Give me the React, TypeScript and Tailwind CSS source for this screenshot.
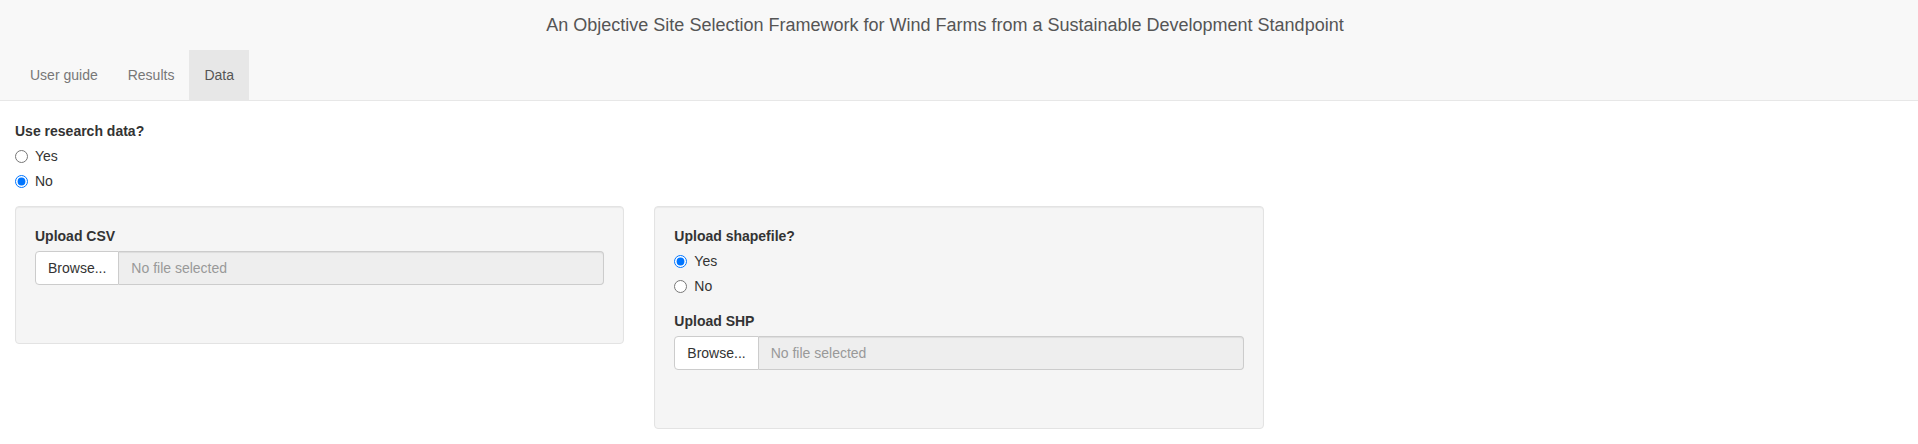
const font = { fontFamily: '"Liberation Sans", Arial, sans-serif' }

function Radio({ name, label, checked }: { name: string; label: string; checked?: boolean }) {
  return (
    <label className="flex h-5 items-center gap-[7px] text-[14px] leading-5 text-[#333]">
      <input type="radio" name={name} defaultChecked={checked} className="m-0 h-[13px] w-[13px]" />
      <span>{label}</span>
    </label>
  )
}

function FileInput({ label }: { label: string }) {
  return (
    <div>
      <div className="mb-[5px] text-[14px] font-bold leading-5 text-[#333]">{label}</div>
      <div className="flex h-[34px] text-[14px]">
        <span className="flex items-center rounded-l-[4px] border border-[#ccc] bg-white px-3 text-[#333]">Browse...</span>
        <span className="flex flex-1 items-center rounded-r-[4px] border border-l-0 border-[#ccc] bg-[#eee] px-3 text-[#999] shadow-[inset_0_1px_1px_rgba(0,0,0,0.075)]">
          No file selected
        </span>
      </div>
      {/* hidden progress bar space */}
      <div className="mb-[15px] h-[24px]" />
    </div>
  )
}

function Well({ children }: { children: React.ReactNode }) {
  return (
    <div className="rounded-[4px] border border-[#e3e3e3] bg-[#f5f5f5] p-[19px] shadow-[inset_0_1px_1px_rgba(0,0,0,0.05)]">
      {children}
    </div>
  )
}

export default function App() {
  return (
    <div className="min-h-[444px] bg-white" style={font}>
      <header className="border-b border-[#e7e7e7] bg-[#f8f8f8]">
        <div className="flex h-[50px] items-center justify-center pr-[28px] text-[18px] text-[#555]">
          An Objective Site Selection Framework for Wind Farms from a Sustainable Development Standpoint
        </div>
        <nav className="flex h-[50px] pl-[15px] text-[14px]">
          <span className="px-[15px] leading-[50px] text-[#777]">User guide</span>
          <span className="px-[15px] leading-[50px] text-[#777]">Results</span>
          <span className="bg-[#e7e7e7] px-[15px] leading-[50px] text-[#555]">Data</span>
        </nav>
      </header>

      <main className="px-[15px] pt-[20px]">
        <div className="mb-[5px] text-[14px] font-bold leading-5 text-[#333]">Use research data?</div>
        <div className="mb-[15px] flex flex-col gap-[5px]">
          <Radio name="research" label="Yes" />
          <Radio name="research" label="No" checked />
        </div>

        <div className="-mx-[15px] grid grid-cols-3 items-start">
          <div className="px-[15px]">
            <Well>
              <FileInput label="Upload CSV" />
            </Well>
          </div>
          <div className="px-[15px]">
            <Well>
              <div className="mb-[5px] text-[14px] font-bold leading-5 text-[#333]">Upload shapefile?</div>
              <div className="mb-[15px] flex flex-col gap-[5px]">
                <Radio name="shape" label="Yes" checked />
                <Radio name="shape" label="No" />
              </div>
              <FileInput label="Upload SHP" />
            </Well>
          </div>
        </div>
      </main>
    </div>
  )
}
